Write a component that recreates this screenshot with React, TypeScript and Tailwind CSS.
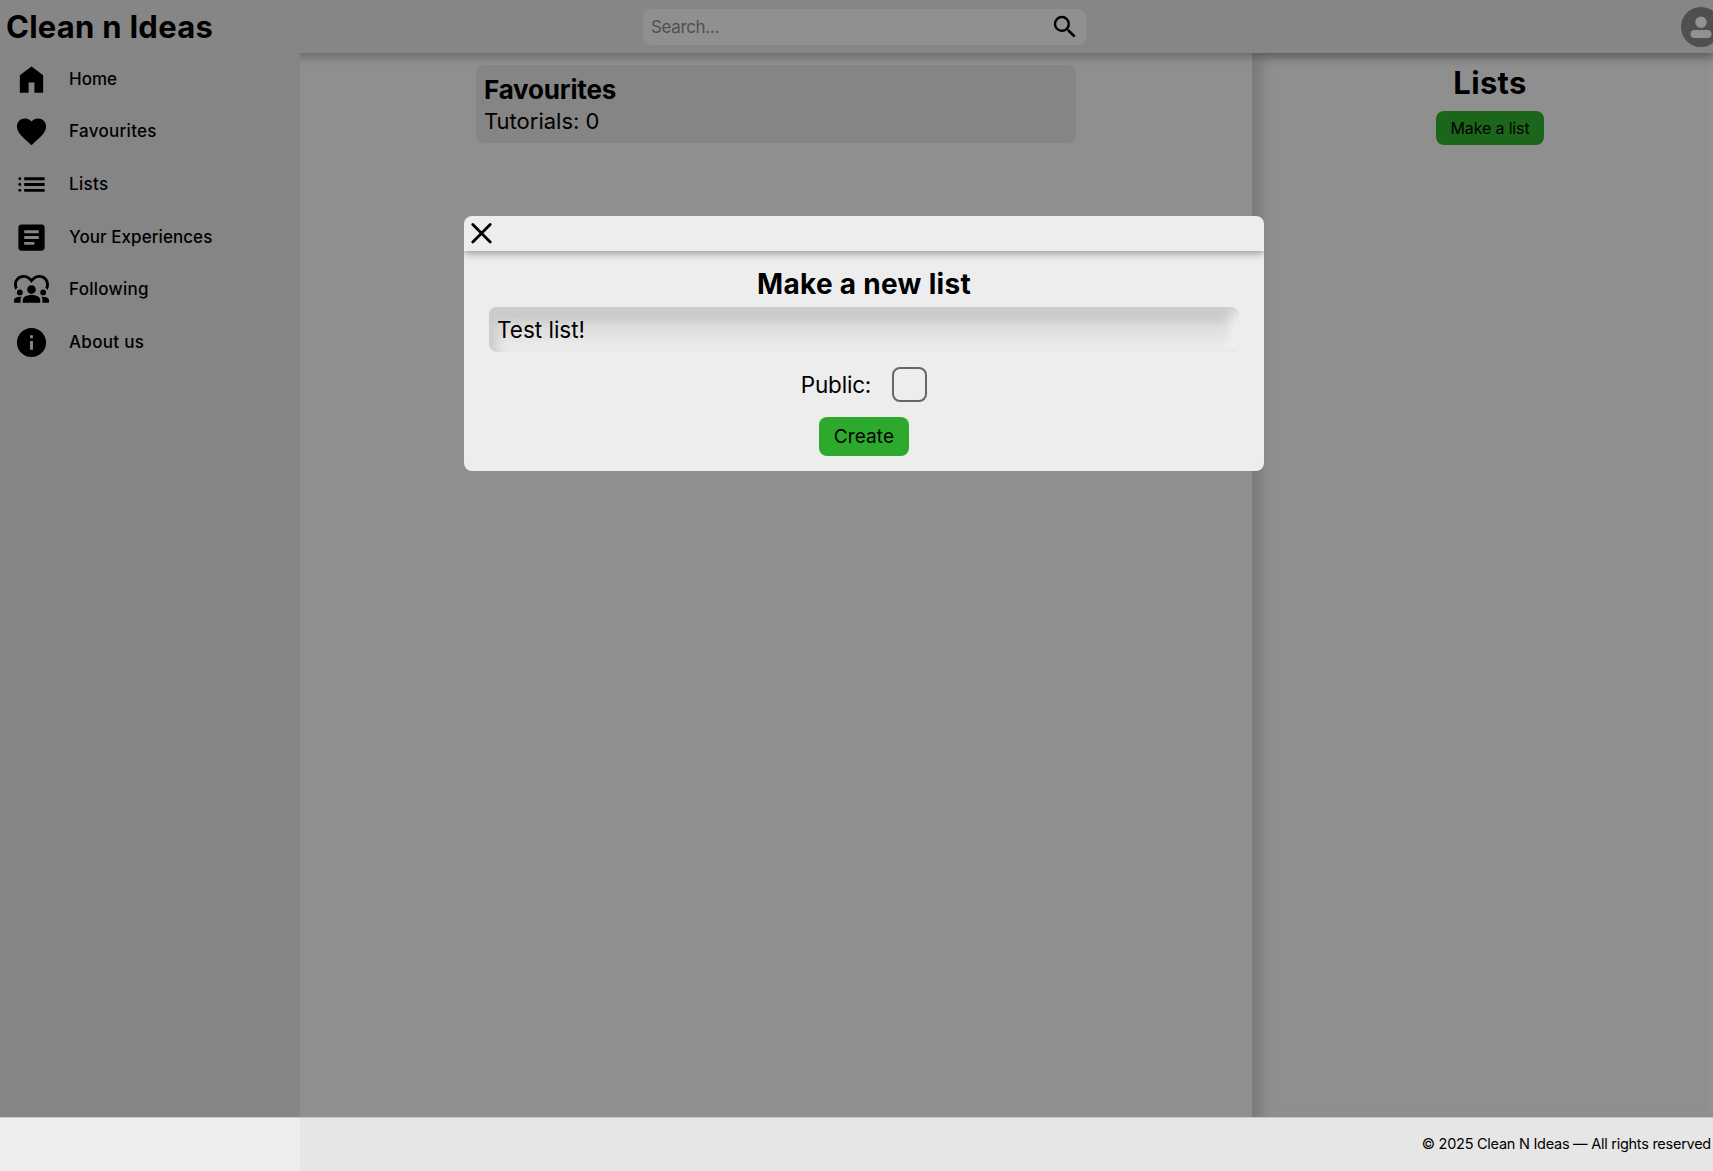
import React from "react";
import { MdFavorite, MdArticle, MdDiversity1, MdInfo, MdSearch } from "react-icons/md";

const HomeIcon = () => (
  <svg viewBox="0 0 24 24" className="size-[35px]"><path d="M4 21V9l8-6 8 6v12h-6v-7h-4v7z" /></svg>
);
const ListIcon = () => (
  <svg viewBox="0 0 24 24" className="size-[35px]">
    <path d="M7 7h14v2H7zM7 11h14v2H7zM7 15h14v2H7z" />
    <circle cx="4" cy="8" r="1" /><circle cx="4" cy="12" r="1" /><circle cx="4" cy="16" r="1" />
  </svg>
);

const nav = [
  { label: "Home", icon: <HomeIcon />, track: "tracking-[0px]" },
  { label: "Favourites", icon: <MdFavorite className="size-[35px]" />, track: "tracking-[0.3px]" },
  { label: "Lists", icon: <ListIcon />, track: "tracking-[0.3px]" },
  { label: "Your Experiences", icon: <MdArticle className="size-[35px]" />, track: "tracking-[0.06px] pt-px" },
  { label: "Following", icon: <MdDiversity1 className="size-[35px]" />, track: "tracking-[0.27px] pt-px" },
  { label: "About us", icon: <MdInfo className="size-[35px]" />, track: "tracking-[0.3px]" },
];

export default function App() {
  return (
    <div className="relative flex h-[1171px] w-[1713px] flex-col overflow-hidden bg-[#8f8f8f] font-['Inter',sans-serif] text-black">
      <header className="relative z-10 flex h-[53px] shrink-0 items-center bg-[#868686] shadow-[0_4px_8px_rgba(0,0,0,0.25)]">
        <h1 className="w-[643px] shrink-0 pl-[6px] text-[31px] leading-[53px] font-bold tracking-[0.25px] whitespace-nowrap"><span>Clean n Ideas</span></h1>
        <form className="flex h-9 w-[443px] shrink-0 overflow-hidden rounded-lg bg-[#8f8f8f]">
          <div className="flex w-[400px] items-center pt-0.5 pl-2 text-[17px] tracking-[-0.35px] text-[#505050]"><span>Search...</span></div>
          <button type="button" className="flex w-[43px] items-center justify-center bg-[#909090]"><MdSearch className="size-[30px]" /></button>
        </form>
        <svg viewBox="0 0 40 40" className="ml-[595px] size-10 shrink-0">
          <circle cx="20" cy="20" r="20" fill="#4e4f51" />
          <circle cx="20" cy="15.3" r="5.7" fill="#929292" />
          <rect x="9.5" y="23" width="21" height="8" rx="4" fill="#929292" />
        </svg>
      </header>

      <div className="flex min-h-0 flex-1">
        <nav className="z-20 flex w-[300px] shrink-0 flex-col bg-[#858585]">
          {nav.map((n) => (
            <a key={n.label} className="flex h-[52.6px] items-center pl-[14px]">
              {n.icon}
              <span className={"ml-5 text-[17px] font-medium " + n.track}>{n.label}</span>
            </a>
          ))}
        </nav>
        <main className="w-[952px] shrink-0 pt-3 pl-[176px]">
          <section className="flex h-[78px] w-[600px] flex-col rounded-lg bg-[#858585] pl-2 pt-[9px]">
            <h2 className="text-[26px] leading-8 font-bold tracking-[-0.18px]"><span>Favourites</span></h2>
            <p className="text-[22px] leading-[30px]"><span>Tutorials: 0</span></p>
          </section>
        </main>
        <aside className="flex flex-1 flex-col items-center bg-[#8f8f8f] pr-2 pl-[23px] pt-[11px] shadow-[inset_10px_4px_12px_rgba(0,0,0,0.15),inset_-4px_-4px_8px_rgba(255,255,255,0.04)]">
          <h2 className="text-[31px] leading-[38px] font-bold tracking-[0.3px]"><span>Lists</span></h2>
          <button className="mt-[9px] h-[34px] w-[108px] rounded-lg bg-[#1c661c] text-[16px] tracking-[-0.15px]"><span>Make a list</span></button>
        </aside>
      </div>

      <footer className="flex h-[54px] shrink-0 border-t border-[#c8c8c8] bg-[#e6e6e6]">
        <div className="w-[300px] bg-[#ededed]" />
        <div className="flex flex-1 items-center justify-end pr-[2px] pb-px text-[14.5px] tracking-[-0.26px]"><span className="whitespace-nowrap">© 2025 Clean N Ideas — All rights reserved</span></div>
      </footer>

      <div role="dialog" className="absolute top-[215.5px] left-[464px] z-30 flex h-[255.5px] w-[800px] flex-col overflow-hidden rounded-lg bg-[#ededed]">
        <div className="flex h-[35.5px] shrink-0 items-center pl-[7px] shadow-[0_2px_8px_rgba(0,0,0,0.4)]">
          <svg viewBox="0 0 21 21" className="size-[21px]" stroke="#000" strokeWidth="2.8" strokeLinecap="round"><path d="M1.8 1.5l17.4 17.4M19.2 1.5L1.8 18.9" /></svg>
        </div>
        <div className="flex flex-col items-center">
          <h2 className="mt-[15px] text-[28px] leading-9 font-bold tracking-[0.3px]"><span>Make a new list</span></h2>
          <div className="mt-[5px] flex h-[45px] w-[750px] items-center rounded-lg bg-[linear-gradient(#cbcbcb_20%,#e0e0e0_50%,#e8e8e8)] pl-2 text-[22.5px] shadow-[inset_8px_4px_12px_#cbcbcb,inset_-8px_-6px_12px_#f2f2f2]"><span>Test list!</span></div>
          <div className="mt-[15px] flex items-center gap-[21px] text-[22.5px] tracking-[-0.2px]">
            <span>Public:</span>
            <div className="size-[35px] rounded-lg border-2 border-[#666]" />
          </div>
          <button className="mt-[15px] h-[39px] w-[90px] rounded-lg bg-[#2daa2d] pt-0.5 text-[19px] tracking-[0.1px]"><span>Create</span></button>
        </div>
      </div>
    </div>
  );
}
